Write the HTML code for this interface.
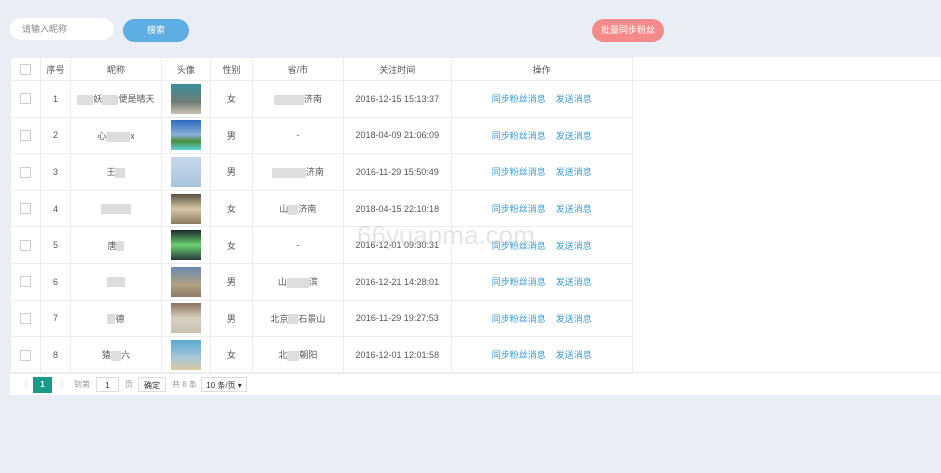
<!DOCTYPE html>
<html><head><meta charset="utf-8"><style>
*{margin:0;padding:0;box-sizing:border-box}
body{width:941px;height:473px;background:#e9edf5;font-family:"Liberation Sans","Noto Sans CJK SC",sans-serif;font-size:9px;color:#555;position:relative;overflow:hidden}
.inp{position:absolute;left:10px;top:18px;width:104px;height:22px;background:#fff;border-radius:11px;padding-left:12px;line-height:22px;color:#888;font-size:9px}
.btn{position:absolute;top:19px;height:23px;border-radius:12px;color:#fff;text-align:center;line-height:23px;font-size:9px}
.panel{position:absolute;left:10px;top:57px;width:931px;height:338px;background:#fff}
table{border-collapse:collapse;position:absolute;left:0;top:0}
td{border:1px solid #ececec;text-align:center;height:36.6px;font-size:9px;color:#555;padding:0}
tr td:last-child{border-right:none;border-top:none;border-bottom:none}
tr.h td:last-child{border-bottom:1px solid #ececec}
tr.h td{height:23px;color:#555}
.cb{display:inline-block;width:11px;height:11px;border:1px solid #ccc;vertical-align:middle}
.av{display:inline-block;width:30px;height:30px;vertical-align:middle}
.lk{color:#3a9bd6;margin:0 5px}
.bl{display:inline-block;width:16px;height:10px;background:#ddd;vertical-align:middle}
.pg{position:absolute;left:0;top:315px;height:23px;width:931px;border-top:1px solid #ececec;font-size:8px;color:#999}
.pg span{position:absolute;top:4px;line-height:15px}
.wm{position:absolute;left:357px;top:220px;font-size:26px;color:rgba(180,180,180,.35)}
</style></head><body>
<div class="inp">请输入昵称</div>
<div class="btn" style="left:123px;width:66px;background:#5eade3">搜索</div>
<div class="btn" style="left:592px;width:72px;background:#f48a8a">批量同步粉丝</div>
<div class="panel">
<table>
<tr class="h"><td style="width:30px"><span class="cb"></span></td><td style="width:30px">序号</td><td style="width:91px">昵称</td><td style="width:49px">头像</td><td style="width:42px">性别</td><td style="width:91px">省/市</td><td style="width:108px">关注时间</td><td style="width:181px">操作</td><td style="width:309px"></td></tr>
<tr><td><span class="cb"></span></td><td>1</td><td><span class="bl"></span>妖<span class="bl"></span>便是晴天</td><td><span class="av" style="background:linear-gradient(#3a8f99,#6f7c78 60%,#c9c2b0)"></span></td><td>女</td><td><span class="bl" style="width:30px"></span>济南</td><td>2016-12-15 15:13:37</td><td><span class="lk">同步粉丝消息</span><span class="lk">发送消息</span></td><td></td></tr>
<tr><td><span class="cb"></span></td><td>2</td><td>心<span class="bl" style="width:24px"></span>x</td><td><span class="av" style="background:linear-gradient(#2a6bc0,#8ab0d8 50%,#4a8a3a 70%,#5ad6d8)"></span></td><td>男</td><td>-</td><td>2018-04-09 21:06:09</td><td><span class="lk">同步粉丝消息</span><span class="lk">发送消息</span></td><td></td></tr>
<tr><td><span class="cb"></span></td><td>3</td><td>王<span class="bl" style="width:10px"></span></td><td><span class="av" style="background:linear-gradient(#c8d8ea,#a9c3de)"></span></td><td>男</td><td><span class="bl" style="width:34px"></span>济南</td><td>2016-11-29 15:50:49</td><td><span class="lk">同步粉丝消息</span><span class="lk">发送消息</span></td><td></td></tr>
<tr><td><span class="cb"></span></td><td>4</td><td><span class="bl" style="width:30px"></span></td><td><span class="av" style="background:linear-gradient(#5a5040,#d8c8a8 50%,#8a7a60)"></span></td><td>女</td><td>山<span class="bl" style="width:10px"></span>济南</td><td>2018-04-15 22:10:18</td><td><span class="lk">同步粉丝消息</span><span class="lk">发送消息</span></td><td></td></tr>
<tr><td><span class="cb"></span></td><td>5</td><td>唐<span class="bl" style="width:8px"></span></td><td><span class="av" style="background:linear-gradient(#1a2a2a,#6ad070 50%,#2a3a3a)"></span></td><td>女</td><td>-</td><td>2016-12-01 09:30:31</td><td><span class="lk">同步粉丝消息</span><span class="lk">发送消息</span></td><td></td></tr>
<tr><td><span class="cb"></span></td><td>6</td><td><span class="bl" style="width:18px"></span></td><td><span class="av" style="background:linear-gradient(#6a8ab0,#b0a080 60%,#8a7a6a)"></span></td><td>男</td><td>山<span class="bl" style="width:22px"></span>滨</td><td>2016-12-21 14:28:01</td><td><span class="lk">同步粉丝消息</span><span class="lk">发送消息</span></td><td></td></tr>
<tr><td><span class="cb"></span></td><td>7</td><td><span class="bl" style="width:8px"></span>德</td><td><span class="av" style="background:linear-gradient(#8a7060,#d8d0c0 50%,#c8c0b0)"></span></td><td>男</td><td>北京<span class="bl" style="width:10px"></span>石景山</td><td>2016-11-29 19:27:53</td><td><span class="lk">同步粉丝消息</span><span class="lk">发送消息</span></td><td></td></tr>
<tr><td><span class="cb"></span></td><td>8</td><td>猿<span class="bl" style="width:10px"></span>六</td><td><span class="av" style="background:linear-gradient(#5aa8d0,#a8c8d8 60%,#d8c8a0)"></span></td><td>女</td><td>北<span class="bl" style="width:12px"></span>朝阳</td><td>2016-12-01 12:01:58</td><td><span class="lk">同步粉丝消息</span><span class="lk">发送消息</span></td><td></td></tr>
</table>
<div class="pg">
<span style="left:10px;color:#ccc">〈</span>
<span style="left:23px;top:4px;width:19px;height:16px;background:#1a9a8a;color:#fff;text-align:center;font-weight:bold">1</span>
<span style="left:50px;color:#ccc">〉</span>
<span style="left:64px">到第</span>
<span style="left:86px;width:23px;height:15px;border:1px solid #ddd;text-align:center;color:#333">1</span>
<span style="left:115px">页</span>
<span style="left:128px;width:28px;height:15px;border:1px solid #ddd;text-align:center;color:#333">确定</span>
<span style="left:162px">共 8 条</span>
<span style="left:191px;width:46px;height:15px;border:1px solid #ddd;text-align:center;color:#333">10 条/页 ▾</span>
</div>
</div>
<div class="wm">66yuanma.com</div>
</body></html>
